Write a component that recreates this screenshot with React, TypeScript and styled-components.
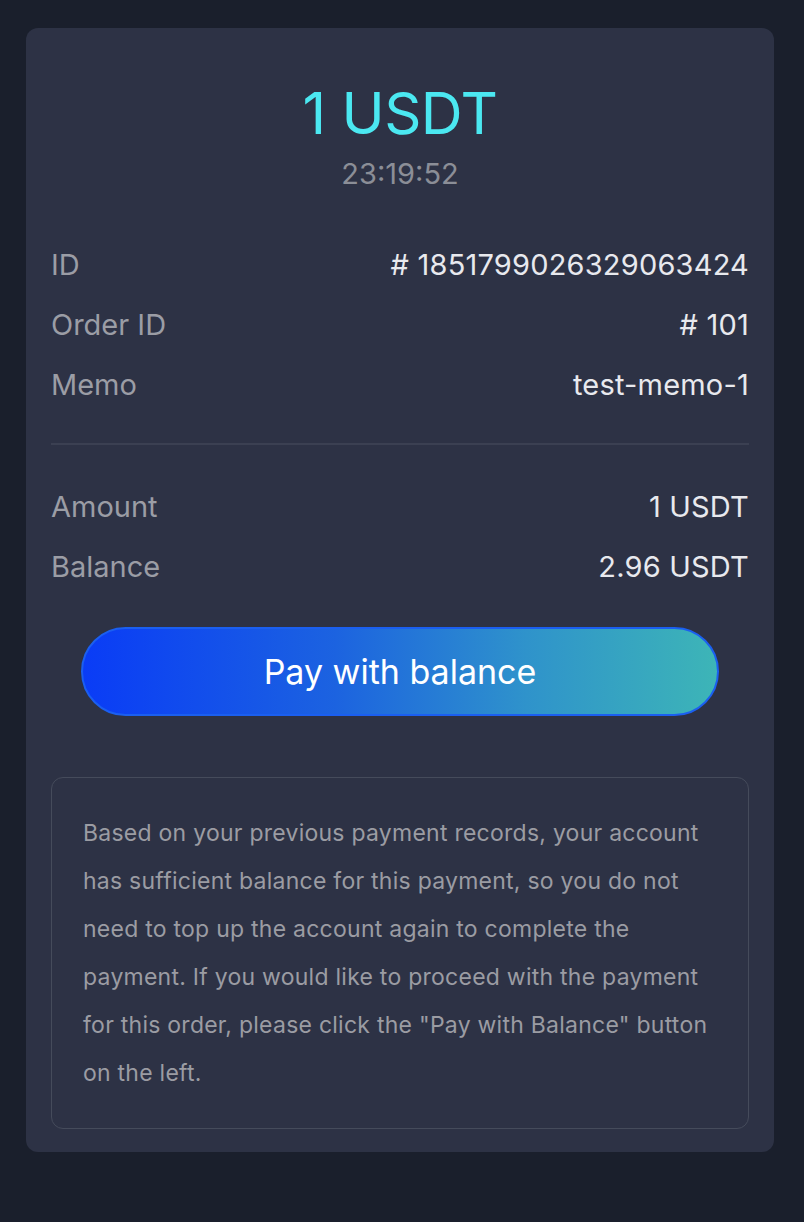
import React from "react";
import styled, { createGlobalStyle } from "styled-components";

const GlobalStyle = createGlobalStyle`
  html, body {
    margin: 0;
    padding: 0;
    background: #1a1f2c;
    font-family: Inter, "Noto Sans", "Liberation Sans", sans-serif;
  }
  * { box-sizing: border-box; }
`;

const Page = styled.div`
  padding: 28px 30px 70px 26px;
  background: #1a1f2c;
  min-height: 1222px;
`;

const Card = styled.div`
  background: #2d3245;
  border-radius: 12px;
  padding: 40px 25px 23px 25px;
  display: flex;
  flex-direction: column;
`;

const Header = styled.div`
  display: flex;
  flex-direction: column;
  align-items: center;
  margin-bottom: 44px;
`;

const Amount = styled.div`
  color: #4be8f1;
  font-size: 58px;
  line-height: 90px;
  font-weight: 400;
  letter-spacing: -0.5px;
`;

const Timer = styled.div`
  color: #8b8e97;
  font-size: 29px;
  line-height: 32px;
`;

const Rows = styled.div`
  display: flex;
  flex-direction: column;
`;

const Row = styled.div`
  display: flex;
  justify-content: space-between;
  align-items: center;
  height: 60px;
  font-size: 29px;
`;

const Label = styled.span`
  color: #9b9da5;
`;

const Value = styled.span`
  color: #e8e9ee;
  letter-spacing: 0.2px;
`;

const Divider = styled.hr`
  border: none;
  height: 2px;
  background: #3b4052;
  margin: 29px 0 31px 0;
`;

const PayButton = styled.button`
  margin: 31px 30px 0 30px;
  height: 89px;
  border-radius: 45px;
  border: 2px solid #1b5ff0;
  background: linear-gradient(90deg, #0a3cf6 0%, #1c63e0 40%, #2f93cb 70%, #3db5b7 100%);
  color: #ffffff;
  font-family: inherit;
  font-size: 34px;
  font-weight: 400;
  cursor: pointer;
`;

const Note = styled.div`
  margin-top: 61px;
  border: 1.5px solid #454b5b;
  border-radius: 12px;
  padding: 31px 32px 31px 31px;
  color: #9b9ca3;
  font-size: 23px;
  line-height: 48px;
  letter-spacing: 0.25px;
`;

const rowsTop = [
  { label: "ID", value: "# 1851799026329063424" },
  { label: "Order ID", value: "# 101" },
  { label: "Memo", value: "test-memo-1" },
];

const rowsBottom = [
  { label: "Amount", value: "1 USDT" },
  { label: "Balance", value: "2.96 USDT" },
];

export default function App() {
  return (
    <>
      <GlobalStyle />
      <Page>
        <Card>
          <Header>
            <Amount>1 USDT</Amount>
            <Timer>23:19:52</Timer>
          </Header>
          <Rows>
            {rowsTop.map((r) => (
              <Row key={r.label}>
                <Label>{r.label}</Label>
                <Value>{r.value}</Value>
              </Row>
            ))}
          </Rows>
          <Divider />
          <Rows>
            {rowsBottom.map((r) => (
              <Row key={r.label}>
                <Label>{r.label}</Label>
                <Value>{r.value}</Value>
              </Row>
            ))}
          </Rows>
          <PayButton>Pay with balance</PayButton>
          <Note>
            Based on your previous payment records, your account has sufficient
            balance for this payment, so you do not need to top up the account
            again to complete the payment. If you would like to proceed with the
            payment for this order, please click the "Pay with Balance" button on
            the left.
          </Note>
        </Card>
      </Page>
    </>
  );
}
